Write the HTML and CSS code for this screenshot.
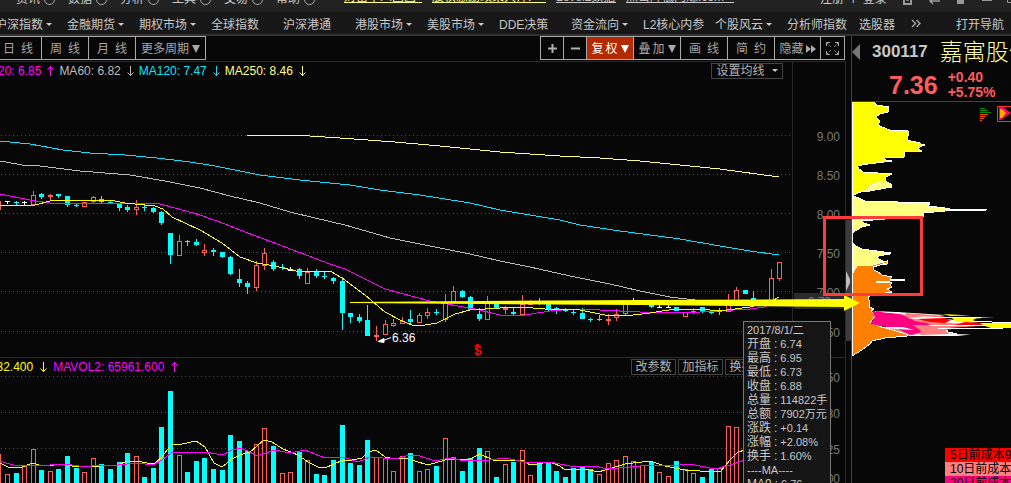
FILE: index.html
```html
<!DOCTYPE html>
<html lang="zh-CN">
<head>
<meta charset="utf-8">
<title>300117 嘉寓股份</title>
<link rel="stylesheet" href="styles.css">
</head>
<body>
<header class="strip">
  <nav class="strip-menu">
    <span>资讯<i class="ring"></i></span><span>数据<i class="ring"></i></span><span>分析<i class="ring"></i></span><span>工具<i class="ring"></i></span><span>交易<i class="ring"></i></span><span>帮助<i class="ring"></i></span>
  </nav>
  <div class="strip-links">
    <a class="hot l1" href="#">财富千人团圆</a><a class="hot l2" href="#">股权激励政策大师!</a><a class="l3" href="#">Level2数据</a><a class="l4" href="#">点击降低网赚.com</a>
  </div>
  <span class="login">注册 个 登录</span>
  <svg class="win-icons" viewBox="900 0 111 12" aria-hidden="true">
    <path d="M904 0v4h7v-4M907.500 0v1" fill="none" stroke="#999" stroke-width="2"/>
    <path d="M930 1h10M933-2l-3 3 3 3" fill="none" stroke="#999" stroke-width="1.5"/>
    <path d="M957 0h7v4h-7zM982 0h10v1h-10z" fill="#999"/>
    <path d="M1007.500 0v2.500h6" fill="none" stroke="#999"/>
  </svg>
</header>

<nav class="menu">
  <a class="drop" href="#">沪深指数</a><a class="drop" href="#">金融期货</a><a class="drop" href="#">期权市场</a><a href="#">全球指数</a><a href="#">沪深港通</a><a class="drop" href="#">港股市场</a><a class="drop" href="#">美股市场</a><a href="#">DDE决策</a><a class="drop" href="#">资金流向</a><a href="#">L2核心内参</a><a class="drop" href="#">个股风云</a><a href="#">分析师指数</a><a href="#">选股器</a>
  <button class="more" aria-label="更多"><svg viewBox="0 0 10 9" width="10" height="9"><path d="M1 1l3.500 3.500L1 8M5.500 1L9 4.500 5.500 8" fill="none" stroke="#aaa" stroke-width="1.300"/></svg></button>
  <a class="guide" href="#">打开导航</a>
</nav>

<main class="work">
  <section class="left">
    <div class="toolbar">
      <div class="group">
        <button class="w47">日&ensp;线</button><button class="w47">周&ensp;线</button><button class="w47">月&ensp;线</button><button class="w70">更多周期<i class="tri"></i></button>
      </div>
      <div class="group">
        <button class="w23" aria-label="放大"><svg viewBox="0 0 9 9" width="9" height="9"><path d="M0 4.500h9M4.500 0v9" stroke="#b0b0b0" stroke-width="2"/></svg></button><button class="w23" aria-label="缩小"><svg viewBox="0 0 9 9" width="9" height="9"><path d="M0 4.500h9" stroke="#b0b0b0" stroke-width="2"/></svg></button><button class="w47 active">复&#8198;权<i class="tri"></i></button><button class="w47">叠&#8198;加<i class="tri"></i></button><button class="w47">画&ensp;线</button><button class="w47">简&ensp;约</button><button class="w47 tight">隐藏<svg viewBox="0 0 10 8" width="10" height="8"><path d="M0 0l5 4-5 4zM5 0l5 4-5 4z" fill="#aaa"/></svg></button><button class="w23" aria-label="全屏"><svg viewBox="0 0 13 13" width="13" height="13"><path d="M.5 4V.5H4M9 .5h3.500V4M12.500 9v3.500H9M4 12.500H.5V9" fill="none" stroke="#aaa"/><path d="M1 1l4 4M12 1L8 5M12 12L8 8M1 12l4-4" fill="none" stroke="#aaa" stroke-dasharray="1.400 1"/></svg></button>
      </div>
    </div>

    <div class="pane">
      <div class="plot">
        <div class="legend">
          <span class="magenta">MA20: 6.85</span><svg class="arr magenta"><use href="#up"/></svg>
          <span class="grey">MA60: 6.82</span><svg class="arr grey"><use href="#down"/></svg>
          <span class="cyan">MA120: 7.47</span><svg class="arr cyan"><use href="#down"/></svg>
          <span class="pale">MA250: 8.46</span><svg class="arr pale"><use href="#down"/></svg>
          <button class="chip set">设置均线<i class="caret"></i></button>
        </div>
        <svg class="price" id="price" viewBox="0 79 792 278" preserveAspectRatio="xMaxYMin meet"></svg>
      </div>
      <svg class="axis" viewBox="793 62 52 295">
        <g class="ticks"><text x="840" y="141">9.00</text><text x="840" y="180">8.50</text><text x="840" y="219">8.00</text><text x="840" y="258">7.50</text><text x="840" y="297">7.00</text><text x="840" y="337">6.50</text></g>
        <rect x="794" y="293" width="51" height="16" fill="#2b2b2b"/>
        <g class="ticks"><text x="831" y="306">6.73</text></g>
      </svg>
    </div>

    <div class="pane volume">
      <div class="plot">
        <div class="legend vol-legend">
          <span class="yellow">MAVOL1: 71032.400</span><svg class="arr yellow"><use href="#down"/></svg>
          <span class="magenta">MAVOL2: 65961.600</span><svg class="arr magenta"><use href="#up"/></svg>
          <div class="chips"><button class="chip">改参数</button><button class="chip">加指标</button><button class="chip">换指标</button></div>
        </div>
        <svg class="vol" id="vol" viewBox="0 375 792 108" preserveAspectRatio="xMaxYMin meet"></svg>
      </div>
      <svg class="axis vol-axis" viewBox="793 358 52 125">
        <g class="ticks"><text x="840" y="382">50</text><text x="840" y="418">30</text><text x="840" y="454">25</text><text x="840" y="483">00</text></g>
      </svg>
    </div>

    <div class="rail"><div class="thumb"><svg viewBox="0 0 5 20" width="5" height="20"><path d="M0 0l4 8v4l-4 8z" fill="#bbb"/></svg></div></div>
  </section>

  <aside class="quote">
    <div class="head">
      <div class="name"><svg viewBox="0 0 8 16" width="8" height="16"><path d="M8 0v16L0 8z" fill="#777"/></svg><span class="code">300117</span><span class="title">嘉寓股份</span></div>
      <div class="last"><strong>7.36</strong><div class="chg"><span>+0.40</span><span>+5.75%</span></div></div>
    </div>
    <svg class="chips-chart" id="profile" viewBox="852 102 159 346" preserveAspectRatio="xMinYMin meet">
      <g stroke="#fff" stroke-width="1" shape-rendering="crispEdges">
        <path fill="#ffff80" d="M852 195L858 192 870 191 892 187 891 184 885 181 880 180 866 188zM852 195L865 201 930 203 928 206 945 208 950 209 987 210 945 211 923 213 924 216 885 219 862 221 864 223 870 225 862 227 852 233V243L856 246 862 249 891 253 890 254 879 256 877 258 883 261 888 262 887 264 873 265 857 266 852 274z"/>
        <path fill="#ff0" d="M852 101L874 102 877 105 889 107 888 112 880 114 876 117 880 121 878 125 882 127 890 130 908 131 908 136 907 140 920 143 921 144 925 145 917 148 922 151 905 152 904 157 884 158 886 160 892 161 868 164 857 166 859 169 863 172 892 174 886 177 885 181 880 182 872 185 866 190 853 195z"/>
        <path fill="#ff8000" d="M852 274L857 266 873 265 887 261 887 263 873 267 874 270 878 272 882 275 892 277 890 279 905 280 876 282 892 283 890 285 892 287 887 289 892 292 870 295 868 298 870 302 869 307 874 309 871 311 876 315 870 323 885 328 908 334 907 336 885 338 872 341 870 344 862 350 852 356z"/>
        <path fill="#ff8080" d="M876 312L900 313 911 315 932 317 945 320 960 322 985 325 950 327 946 329 948 332 957 334 930 335 909 335 890 329z"/>
      </g>
      <path fill="#ff0080" d="M872 311L900 314 907 317 915 321 930 324 921 329 922 332 910 335 898 329 870 324 875 317z"/>
      <path fill="#fff" d="M873 311L896 312 945 315 932 317 955 320 986 324 972 325 942 322 907 318 925 317 900 314zM878 327L903 327 914 330 896 329zM945 331L952 334 971 334.500 957 336 905 336 920 334z"/>
      <path fill="#ff8080" d="M906 313L946 316 940 317 904 316zM913 325L980 326 948 328 945 331 950 334 920 335 921 331z"/>
      <path fill="#f00" d="M917 319L944 318 951 320 945 323 930 322zM950 326L965 322 985 323 995 325 970 326zM978 324h16v1h-16zM945 328h6v2h-4z"/>
      <path fill="#ff0" d="M943 314L971 315.500 950 316zM952 318L995 317 976 318.500 973 320 977 322 956 322zM980 323h31v5h-20l-6-2z"/>
      <path d="M926 317h55M973 321l38 2M930 325h60M938 328h65" stroke="#fff" fill="none" shape-rendering="crispEdges"/>
      <path d="M852.500 102V356" stroke="#fff"/>
      <path d="M979.500 107v14" stroke="#008"/>
      <path d="M980 108.500h5M980 110.500h8M980 112.500h11" stroke="#080"/>
      <path d="M980 114.500h8M980 116.500h5M980 118.500h4M980 120.500h2" stroke="#f40"/>
      <path d="M997.500 106.500h14v15h-14z" stroke="#f33" fill="none"/>
      <path d="M999 107v13h2l10-7-8-6z" fill="#f06"/><path d="M1000 109v9h2l4-5-4-4z" fill="#fa0"/><path d="M999.500 108v12" stroke="#06c"/>
    </svg>
    <ul class="cost"><li class="c5">5日前成本9</li><li class="c10">10日前成本</li><li class="c20">20日前成本</li></ul>
  </aside>

  <svg class="notes" viewBox="340 210 600 110" width="600" height="110" aria-hidden="true">
    <path d="M350 302L480 301 640 300 844 299V295L860 303 844 311V307L640 305 480 304 350 303z" fill="#ff0"/>
    <rect x="824.500" y="217.500" width="97" height="77" fill="none" stroke="#ff3b3b" stroke-width="3"/>
  </svg>

  <dl class="tip">
    <div>2017/8/1/二</div>
    <div><dt>开盘</dt><dd>6.74</dd></div>
    <div><dt>最高</dt><dd>6.95</dd></div>
    <div><dt>最低</dt><dd>6.73</dd></div>
    <div><dt>收盘</dt><dd>6.88</dd></div>
    <div><dt>总量</dt><dd>114822手</dd></div>
    <div><dt>总额</dt><dd>7902万元</dd></div>
    <div><dt>涨跌</dt><dd>+0.14</dd></div>
    <div><dt>涨幅</dt><dd>+2.08%</dd></div>
    <div><dt>换手</dt><dd>1.60%</dd></div>
    <div>----MA----</div>
    <div><dt>MA9</dt><dd>6.76</dd></div>
  </dl>
</main>

<svg class="defs" aria-hidden="true">
  <symbol id="up" viewBox="0 0 18 12"><path d="M9.500 11V1M6.500 4.500l3-3 3 3" fill="none" stroke="currentColor"/></symbol>
  <symbol id="down" viewBox="0 0 18 12"><path d="M9.500 1v10M6.500 7.500l3 3 3-3" fill="none" stroke="currentColor"/></symbol>
</svg>
<script src="chart.js"></script>
</body>
</html>
```

FILE: styles.css
```css
* { box-sizing: border-box; }
body {
  margin: 0;
  height: 100vh;
  overflow: hidden;
  display: flex;
  flex-direction: column;
  background: #070707;
  color: #c8c8c8;
  font: 12px/14px "Liberation Sans", "Noto Sans CJK SC", sans-serif;
}
a { color: inherit; text-decoration: none; }
button {
  margin: 0;
  padding: 0;
  border: 0;
  background: none;
  color: inherit;
  font: inherit;
  white-space: nowrap;
}
svg { display: block; flex: none; }
.defs { width: 0; height: 0; position: absolute; }

.strip {
  flex: none;
  height: 12px;
  display: flex;
  align-items: flex-end;
  overflow: hidden;
  background: #222;
  white-space: nowrap;
}
.strip-menu { display: flex; width: 344px; padding: 0 0 6px 16px; }
.strip-menu span { display: flex; align-items: center; gap: 4px; width: 52px; flex: none; }
.ring { width: 11px; height: 11px; border: 1px solid #aaa; border-radius: 50%; }
.strip-links { display: flex; gap: 10px; padding-bottom: 9px; line-height: 10px; }
.strip-links a { border-bottom: 1px solid #c8c8c8; }
.strip-links .hot { color: #ffff80; border-color: #ffff80; }
.l1 { width: 78px; }
.l2 { width: 114px; }
.l3 { width: 60px; }
.l4 { width: 108px; }
.login { margin-left: auto; padding-bottom: 6px; width: 80px; }
.win-icons { width: 111px; height: 12px; }

.menu {
  flex: none;
  display: flex;
  align-items: center;
  height: 24px;
  padding: 4px 7px 0 0;
  margin-left: -5px;
  background: #171717;
  border-bottom: 2px solid #333;
  white-space: nowrap;
}
.menu > a { flex: none; width: 72px; }
.menu > a:nth-of-type(13) { width: 52px; }
.menu .guide { margin-left: auto; width: auto; }
.menu .more { display: flex; padding-bottom: 3px; }
.drop::after, .caret {
  content: "";
  display: inline-block;
  margin-left: 3px;
  vertical-align: 3px;
  border: 3px solid transparent;
  border-top-color: #c8c8c8;
  border-bottom: 0;
}

.work { flex: 1; min-height: 0; display: flex; position: relative; }
.left {
  flex: 1;
  min-width: 0;
  display: grid;
  grid-template: 25px 296px 1fr / 1fr 5px;
  overflow: hidden;
}
.toolbar {
  grid-column: 1 / -1;
  display: flex;
  justify-content: space-between;
  padding-right: 6px;
  height: 24px;
}
.group { display: flex; border: 1px solid #aaa; border-left: 0; }
.group + .group { border-left: 1px solid #aaa; }
.group button {
  display: flex;
  align-items: center;
  justify-content: center;
  gap: 3px;
  padding-top: 2px;
  color: #a8a8a8;
  border-right: 1px solid #aaa;
}
.group button:last-child { border-right: 0; }
.group .w23 { width: 23px; padding-top: 0; }
.group .w47 { width: 47px; }
.group:first-child .w47:first-child { width: 42px; padding-right: 5px; }
.group .w70 { width: 69px; }
.group .tight { gap: 2px; width: 46px; }
.group .active { background: #b42a00; color: #fff; }
.tri { border: 4px solid transparent; border-top: 8px solid currentColor; border-bottom: 0; }

.pane {
  grid-column: 1;
  display: flex;
  min-height: 0;
  border-top: 1px solid #2a2a2a;
}
.plot { flex: 1; min-width: 0; overflow: hidden; }
.legend {
  display: flex;
  align-items: center;
  height: 17px;
  margin-left: -20px;
  padding-right: 9px;
  white-space: nowrap;
}
.vol-legend { margin-left: -78px; padding-right: 22px; gap: 1px; }
.legend span { flex: none; }
.arr { width: 18px; height: 12px; }
.magenta { color: #f0f; }
.grey { color: #bbb; }
.cyan { color: #00e5ff; }
.pale { color: #ffff80; }
.yellow { color: #ff0; }
.chip {
  height: 16px;
  width: 45px;
  padding-top: 1px;
  border: 1px solid #444;
  color: #b4b4b4;
  line-height: 13px;
}
.set { width: 72px; margin-left: auto; }
.set .caret { margin-left: 7px; }
.chips { margin-left: auto; display: flex; gap: 2px; }
.price { width: 100%; height: 278px; }
.vol { width: 100%; height: 108px; }
.axis { width: 54px; height: 295px; border: solid #2a2a2a; border-width: 0 1px; }
.vol-axis { height: 125px; }
.ticks { fill: #777; text-anchor: end; }
.rail { grid-column: 2; grid-row: 2 / 4; padding-top: 159px; }
.thumb { height: 121px; padding-top: 51px; background: #3c3c3c; }

.quote {
  flex: none;
  width: 160px;
  display: flex;
  flex-direction: column;
  overflow: hidden;
  border-left: 1px solid #444;
}
.head { height: 66px; border-bottom: 1px solid #444; white-space: nowrap; }
.name { display: flex; align-items: center; height: 32px; }
.code { margin-left: 12px; font-size: 17px; font-weight: bold; }
.title { margin-left: 12px; font-size: 23px; line-height: 30px; font-weight: 300; color: #ffff99; }
.last { display: flex; align-items: center; height: 34px; padding-left: 37px; gap: 10px; color: #ff5c5c; }
.last strong { font-size: 25px; line-height: 30px; }
.chg { display: flex; flex-direction: column; font-size: 14px; line-height: 15px; font-weight: bold; }
.chips-chart { width: 159px; height: 346px; }
.cost { list-style: none; margin: 0 0 0 auto; padding: 0; width: 66px; color: #000; white-space: nowrap; }
.cost li { height: 14px; padding-left: 5px; }
.c5 { background: #f00; }
.c10 { background: #ff8080; }
.c20 { background: #ff0080; }

.notes { position: absolute; right: 71px; top: 174px; }
.tip {
  position: absolute;
  right: 180px;
  top: 285px;
  width: 88px;
  margin: 0;
  padding: 1px 3px;
  background: #151515;
  border: 1px solid #777;
  font-size: 11px;
  white-space: nowrap;
}
.tip div { display: flex; height: 14px; }
.tip dd { margin: 0; }
.tip dt { font-size: 12px; }
.tip dt::after { content: ":"; margin: 0 3px; }
.hint { fill: #fff; }
.sig { fill: #f00; font-weight: bold; text-anchor: middle; }
```

FILE: chart.js
```js
// [kind, high, top, bottom, low]; kinds: r hollow, R solid red, c cyan, w white
const candles = `r 201 201 210 210|w 201 201 202 204|c 201 202 203 205|w 201 202 203 205|r 191 195 205 205|c 193 194 197 199|R 194 195 197 200|c 194 194 196 198|c 196 196 205 207|c 204 205 206 207|r 202 202 207 207|r 196 197 202 203|c 196 199 202 203|c 201 202 203 203|c 203 204 208 211|c 205 207 210 212|r 200 207 210 215|c 205 207 208 211|c 207 208 212 213|c 211 212 223 225|c 233 233 255 264|r 235 241 256 256|c 240 241 242 246|c 239 242 245 246|r 244 250 253 256|c 248 250 252 256|c 252 252 257 258|c 256 257 274 275|c 269 279 283 287|c 281 283 287 294|r 261 265 288 291|r 248 253 266 270|c 260 262 269 271|c 264 267 268 270|w 267 269 271 271|c 268 269 276 279|r 268 272 284 284|c 269 271 276 278|c 272 276 277 279|c 277 278 281 284|c 277 281 313 330|c 313 313 317 323|c 314 317 321 323|c 305 320 336 336|r 326 335 337 341|r 320 324 335 335|r 319 323 326 327|r 317 321 324 324|c 310 319 322 325|r 313 315 323 323|r 308 312 316 319|c 309 312 313 315|r 294 302 320 322|r 286 291 302 302|c 290 291 297 298|c 296 297 310 310|c 308 314 319 321|r 296 303 320 320|c 302 303 309 309|R 306 307 310 314|c 308 312 314 315|r 295 304 315 315|R 300 303 305 305|c 298 303 304 305|c 304 304 309 311|c 307 308 310 314|c 308 309 311 312|c 309 312 313 315|c 308 313 319 319|c 318 319 320 322|c 315 319 320 321|R 314 319 321 325|r 309 314 318 321|r 303 303 314 315|w 298 302 303 303|w 303 303 304 304|c 304 305 307 308|w 305 307 308 308|w 305 307 308 308|c 307 307 311 311|r 312 312 317 317|r 308 311 313 314|c 307 307 312 313|c 311 312 313 314|c 308 310 312 315|r 294 303 312 312|r 287 290 303 303|c 290 290 294 294|c 291 298 300 300|w 303 303 304 304|r 269 278 305 305|r 262 262 279 281`.split("|").map(s => s.split(" "));

// kind + top edge of each volume bar
const volumes = "r454 r474 c473 r466 r449 c470 r471 c469 c456 c468 r472 r458 c464 c469 c462 c453 r456 c477 c468 c427 c391 r455 c472 c461 c458 c469 c470 c435 c441 c451 r444 r428 c446 r473 r472 c452 r460 c474 c475 c460 c425 c463 c465 c440 r457 r458 r471 r456 c453 r471 r469 c466 r438 r457 c471 c458 c448 r451 c477 r464 c462 r450 r475 c463 c462 c471 c477 c468 c467 c469 r474 r463 r460 r456 r461 r465 c462 r472 r476 c461 r469 r473 c477 c469 r468 r426 r427 c458".split(" ");

const color = { r: "#ff5c5c", R: "#ff5c5c", c: "#00ffff", w: "#ffffff" };
const centre = i => Math.floor(7.5 + 8.58 * (i - 1));
const line = (pts, stroke) =>
  `<polyline points="${pts}" fill="none" stroke="${stroke}" shape-rendering="crispEdges"/>`;
const grid = (ys, end) => ys.map(y =>
  `<path d="M1 ${y + .5}H${end}" stroke="#555" stroke-dasharray="1 3"/>`).join("");
const box = (x, y, w, h, kind) => kind === "r"
  ? `<rect x="${x + .5}" y="${y + .5}" width="${w - 1}" height="${Math.max(1, h - 1)}" fill="#070707" stroke="${color.r}"/>`
  : `<rect x="${x}" y="${y}" width="${w}" height="${h}" fill="${color[kind]}"/>`;

let price = grid([135, 174, 213, 252, 291, 331], 792);
candles.forEach(([kind, ...v], i) => {
  const [high, top, bottom, low] = v.map(Number);
  const x = centre(i);
  price += `<rect x="${x}" y="${high}" width="1" height="${low - high}" fill="${color[kind]}"/>`;
  price += box(x - 2, top, 5, bottom - top, kind);
});
price += line("247,136 262,135 295,135 340,138 395,142 440,146 500,152 560,156 600,158 640,161 680,165 720,169 779,177", "#ffff80");
price += line("0,141 30,144 63,150 90,153 125,155 157,158 190,162 215,166 240,171 260,175 300,180 350,185 380,190 420,195 470,203 500,210 560,220 580,225 620,231 680,239 720,246 750,251 779,255", "#00e5ff");
price += line("0,161 22,165 40,166 80,171 130,175 165,181 200,188 230,196 260,203 290,212 315,218 345,225 390,238 430,246 470,254 500,261 530,267 570,276 610,284 640,291 670,297 695,300", "#bbb");
price += line("0,194 20,198 35,201 50,203 80,203 160,204 175,208 200,215 225,224 240,230 285,247 330,264 345,269 385,289 430,301 475,309 500,315 525,315 550,311 575,309 600,310 640,312 700,312 750,309 765,307 779,300", "#f0f");
price += line("0,205 35,205 50,201 65,200 110,200 125,203 155,206 163,209 172,217 200,230 222,243 240,257 257,263 275,266 300,272 330,271 342,278 365,295 385,312 400,320 412,325 425,325 437,323 455,314 470,310 500,308 520,307 545,309 575,309 605,315 625,316 650,313 675,309 700,309 720,311 750,307 770,302 779,297", "#ff0");
price += `<path d="M391 337.500L382 341M378 341.500l6-3v4z" fill="#fff" stroke="#fff" stroke-width="1"/><text class="hint" x="392" y="342">6.36</text>`;
price += `<path d="M477.500 343.500l4 3h-8z" fill="#f00"/><text class="sig" x="478" y="355">S</text><path d="M477.500 345v11" stroke="#f00"/>`;
document.getElementById("price").innerHTML = price;

let vol = grid([376, 412, 448], 792);
volumes.forEach((item, i) => {
  const top = Number(item.slice(1));
  vol += box(centre(i) - 2, top, 5, 486 - top, item[0]);
});
vol += line("0,463 8,467 22,467 33,463 42,466 66,464 75,467 100,466 118,465 127,461 137,461 147,463 155,463 162,457 171,445 182,444 196,441 205,447 214,463 222,467 232,459 240,455 250,452 264,440 272,442 283,449 298,455 308,462 318,467 325,468 343,460 352,460 362,458 368,452 376,450 385,457 395,459 405,458 415,461 428,465 445,460 470,459 480,454 493,460 522,460 530,465 550,462 560,466 565,470 585,469 598,472 612,468 625,464 650,461 665,466 685,470 700,471 720,472 730,460 738,452 745,450", "#ff0");
vol += line("0,461 16,466 33,465 50,465 66,464 85,467 100,465 118,465 137,463 153,465 162,460 171,453 180,452 188,453 205,452 223,455 232,450 240,448 248,451 257,456 275,450 290,453 305,450 325,458 343,457 358,462 370,457 395,459 410,455 420,456 435,461 450,458 465,461 490,460 505,458 530,463 550,462 575,467 595,466 607,469 630,467 650,465 670,466 690,464 715,469 730,465 745,460", "#f0f");
document.getElementById("vol").innerHTML = vol;
```
